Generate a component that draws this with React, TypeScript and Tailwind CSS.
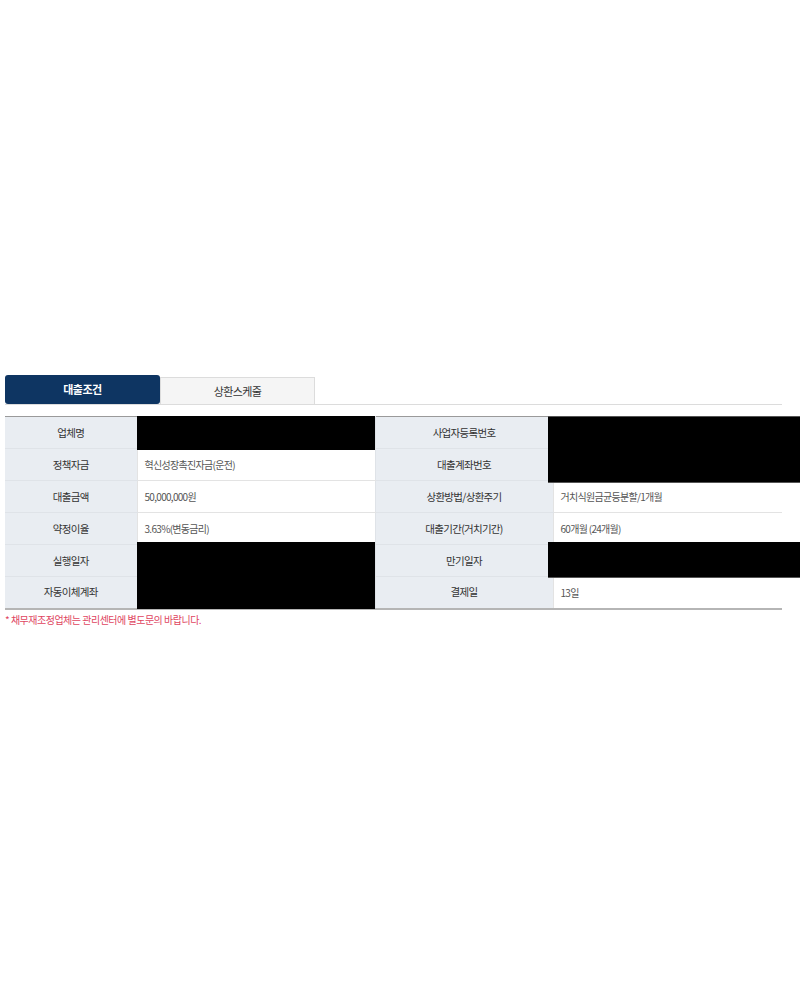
import React from "react";

const FONT = { fontFamily: '"Noto Sans CJK KR", "Noto Sans", sans-serif' };

type Cell = { label: string; value?: string };

const ROWS: [Cell, Cell][] = [
  [{ label: "업체명" }, { label: "사업자등록번호" }],
  [{ label: "정책자금", value: "혁신성장촉진자금(운전)" }, { label: "대출계좌번호" }],
  [{ label: "대출금액", value: "50,000,000원" }, { label: "상환방법/상환주기", value: "거치식원금균등분할/1개월" }],
  [{ label: "약정이율", value: "3.63%(변동금리)" }, { label: "대출기간(거치기간)", value: "60개월 (24개월)" }],
  [{ label: "실행일자" }, { label: "만기일자" }],
  [{ label: "자동이체계좌" }, { label: "결제일", value: "13일" }],
];

function Label({ text, first }: { text: string; first?: boolean }) {
  return (
    <td
      className={`h-[32px] bg-[#e9edf2] text-center text-[10.5px] tracking-[-0.7px] text-[#333] border-b border-[#dfe3e8] ${
        first ? "" : "border-l border-[#cfd3d8]"
      }`}
    >
      {text}
    </td>
  );
}

function Value({ text }: { text?: string }) {
  return (
    <td className="h-[32px] bg-white pl-[7px] text-[10px] tracking-[-0.7px] text-[#555] border-b border-l border-[#e3e3e3]">
      {text}
    </td>
  );
}

export default function App() {
  return (
    <div className="min-h-[1000px] w-[800px] bg-white" style={FONT}>
      <div className="pt-[375px] pl-[5px] w-[782px]">
        {/* Tabs */}
        <div className="flex items-end border-b border-[#dcdcdc]">
          <div className="flex h-[29px] w-[155px] items-center justify-center rounded-[3px] bg-[#0e3562] text-[11px] font-bold tracking-[-0.5px] text-white">
            대출조건
          </div>
          <div className="flex h-[27px] w-[155px] items-center justify-center border border-b-0 border-[#dcdcdc] bg-[#f5f5f5] text-[11px] tracking-[-0.6px] text-[#333]">
            상환스케줄
          </div>
        </div>

        {/* Table */}
        <div className="relative mt-[11px]">
          <table className="w-full border-collapse border-t border-[#9a9a9a] border-b-2 border-b-[#b5b5b5]">
            <colgroup>
              <col className="w-[132px]" />
              <col className="w-[238px]" />
              <col className="w-[178px]" />
              <col />
            </colgroup>
            <tbody>
              {ROWS.map(([a, b]) => (
                <tr key={a.label}>
                  <Label text={a.label} first />
                  <Value text={a.value} />
                  <Label text={b.label} />
                  <Value text={b.value} />
                </tr>
              ))}
            </tbody>
          </table>

          {/* redacted areas */}
          <div className="absolute left-[132px] top-0 h-[34px] w-[238px] bg-black" />
          <div className="absolute left-[543px] top-0 h-[67px] w-[252px] border-y border-[#555] bg-black" />
          <div className="absolute left-[132px] top-[126px] h-[67px] w-[238px] bg-black" />
          <div className="absolute left-[543px] top-[126px] h-[36px] w-[252px] border-b border-[#555] bg-black" />
        </div>

        <p className="mt-[2px] text-[10px] tracking-[-0.5px] text-[#e0455f]">
          * 채무재조정업체는 관리센터에 별도문의 바랍니다.
        </p>
      </div>
    </div>
  );
}
